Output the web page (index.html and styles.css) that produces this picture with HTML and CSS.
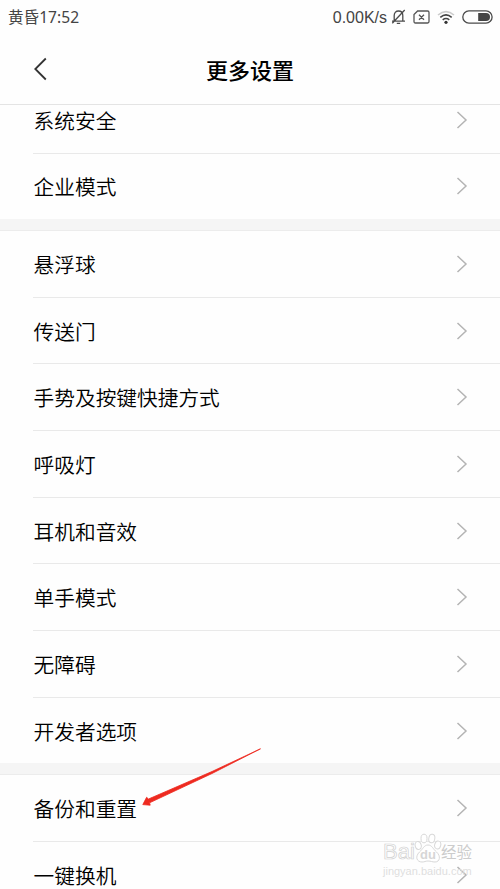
FILE: index.html
```
<!DOCTYPE html>
<html lang="zh-CN">
<head>
<meta charset="utf-8">
<title>更多设置</title>
<link rel="stylesheet" href="styles.css">
</head>
<body>
<svg class="defs" width="0" height="0"><symbol id="next" viewBox="0 0 12 18"><path d="M1.5 1 L10 9 L1.5 17" fill="none" stroke="#b4b4b4" stroke-width="1.5"/></symbol></svg>
<div class="phone">
  <header class="status">
    <span class="clock">黄昏17:52</span>
    <div class="indicators">
      <span class="speed">0.00K/s</span>
      <svg class="bell" width="15" height="16" viewBox="0 0 15 16" fill="none" stroke="#4c4c4c" stroke-width="1.3"><path d="M1 12.2H14M3.2 12V6.5C3.2 3.5 5 2 7.5 2S11.8 3.5 11.8 6.5V12M5.8 14.3H9.2M1.3 14.2L13.7 1"/></svg>
      <svg class="sim" width="17" height="14" viewBox="0 0 17 14" fill="none" stroke="#555" stroke-width="1.3"><path d="M4.6 1H14.6Q16 1 16 2.4V11.6Q16 13 14.6 13H2.4Q1 13 1 11.6V4.6ZM6 4.7L11 9.7M11 4.7L6 9.7"/></svg>
      <svg class="wifi" width="18" height="15" viewBox="0 0 18 15" fill="none" stroke-width="1.6"><path stroke="#ccc" d="M1 5Q9-1.8 17 5"/><path stroke="#444" d="M3.3 7.3Q9 2.6 14.7 7.3M5.7 9.8Q9 7.2 12.3 9.8"/><circle cx="9" cy="12.3" r="1.6" fill="#333"/></svg>
      <svg class="battery" width="31" height="14" viewBox="0 0 31 14"><rect x=".8" y=".9" width="29.3" height="12.2" rx="6.1" fill="none" stroke="#4b4b4b" stroke-width="1.3"/><path d="M16.2 3H24A4 4 0 0 1 24 11H16.2Z" fill="#444"/></svg>
    </div>
  </header>
  <nav class="titlebar">
    <svg class="back" width="14" height="24" viewBox="0 0 14 24"><path d="M12.8 1.5L2.3 12L12.8 22.5" fill="none" stroke="#333" stroke-width="1.8"/></svg>
    <h1>更多设置</h1>
  </nav>
  <main class="list">
    <section class="group clipped">
      <div class="row"><span>系统安全</span><svg class="next"><use href="#next"/></svg></div>
      <div class="row"><span>企业模式</span><svg class="next"><use href="#next"/></svg></div>
    </section>
    <section class="group">
      <div class="row"><span>悬浮球</span><svg class="next"><use href="#next"/></svg></div>
      <div class="row"><span>传送门</span><svg class="next"><use href="#next"/></svg></div>
      <div class="row"><span>手势及按键快捷方式</span><svg class="next"><use href="#next"/></svg></div>
      <div class="row"><span>呼吸灯</span><svg class="next"><use href="#next"/></svg></div>
      <div class="row"><span>耳机和音效</span><svg class="next"><use href="#next"/></svg></div>
      <div class="row"><span>单手模式</span><svg class="next"><use href="#next"/></svg></div>
      <div class="row"><span>无障碍</span><svg class="next"><use href="#next"/></svg></div>
      <div class="row"><span>开发者选项</span><svg class="next"><use href="#next"/></svg></div>
    </section>
    <section class="group">
      <div class="row"><span>备份和重置</span><svg class="next"><use href="#next"/></svg></div>
      <div class="row"><span>一键换机</span><svg class="next"><use href="#next"/></svg></div>
    </section>
  </main>
  <svg class="arrow" width="122" height="60" viewBox="0 0 122 60"><path d="M118.5 1.8L70 24.5L6.5 52L4.6 50.3L.8 57.6L8.2 58.2L7.6 55.8L70 26.5Z" fill="#ee2a20" stroke="#ee2a20" stroke-width=".8" stroke-linejoin="round"/></svg>
  <div class="watermark">
    <div class="brand"><span class="latin">Bai</span><svg width="28" height="32" viewBox="0 0 28 32" fill="#fff" stroke="#d8d8d8" stroke-width="1"><ellipse cx="4.2" cy="12.5" rx="3" ry="4" transform="rotate(-15 4.2 12.5)"/><ellipse cx="10" cy="5.5" rx="3" ry="4.3"/><ellipse cx="17.8" cy="5.5" rx="3" ry="4.3" transform="rotate(10 17.8 5.5)"/><ellipse cx="23.7" cy="12" rx="3" ry="4" transform="rotate(15 23.7 12)"/><path d="M14 12C10 12 9 16 5.5 19C.5 24 3 29 8 29C11 29 11 28 14 28S18 29 21 29C26 29 27 23 22.5 19C19 16 18 12 14 12Z"/><text x="14" y="26" text-anchor="middle">du</text></svg><span class="cn">经验</span></div>
    <div class="site">jingyan.baidu.com</div>
  </div>
</div>
</body>
</html>
```
FILE: styles.css
```
* { box-sizing: border-box; }
body { margin: 0; background: #fff; font-family: "Noto Sans CJK SC", sans-serif; color: #111; }
.defs { position: absolute; }
.phone { position: relative; width: 500px; height: 889px; overflow: hidden; display: flex; flex-direction: column; background: #fefefe; }
.status { height: 35px; padding: 0 7px 0 8px; display: flex; align-items: center; justify-content: space-between; flex: none; color: #444; }
.clock { font: 15.6px/35px "Noto Sans", "Noto Sans CJK SC", sans-serif; }
.indicators { display: flex; align-items: center; padding-bottom: 1px; }
.speed { font: 16px/35px "Liberation Sans", sans-serif; margin-right: 4px; }
.bell { margin-right: 7px; }
.sim { margin-right: 7px; }
.wifi { margin-right: 7px; }
.titlebar { height: 70px; flex: none; padding: 0 0 1px 33px; display: flex; align-items: center; border-bottom: 1px solid #e4e4e4; }
.back { flex: none; }
h1 { margin: 0 0 1px; width: 406px; text-align: center; font-size: 22px; line-height: 32px; font-weight: 500; color: #000; }
.list { flex: 1; min-height: 0; overflow: hidden; background: #f5f5f5; }
.group { background: #fefefe; margin-bottom: 12px; padding-left: 33px; box-shadow: 0 -1px #ececec; }
.clipped { margin-top: -18.2px; }
.row { height: 66.7px; display: flex; align-items: center; justify-content: space-between; padding: 0 32px 0 0; border-bottom: 1px solid #e9e9e9; font-size: 20.7px; line-height: 24px; font-weight: 350; color: #000; }
.row:last-child { height: 65.5px; border-bottom: 0; }
.next { width: 12px; height: 18px; }
.row span { padding-left: .6px; }
.arrow { position: absolute; left: 142px; top: 747px; }
.watermark { position: absolute; left: 383px; top: 835px; width: 92px; color: #fff; font-family: "Liberation Sans", "Noto Sans CJK SC", sans-serif; -webkit-text-stroke: .7px #d0d0d0; }
.brand { display: flex; align-items: flex-end; height: 30px; font-size: 22px; line-height: 24px; }
.brand svg { flex: none; margin-left: -2px; }
.latin { width: 33px; font-size: 22px; padding-bottom: 1px; }
.brand text { font: bold 13px "Liberation Sans", sans-serif; stroke: none; fill: #d6d6d6; -webkit-text-stroke: 0; }
.cn { font-size: 15.5px; line-height: 22px; font-weight: normal; color: #ccc; white-space: nowrap; -webkit-text-stroke: 0; margin-left: -1px; padding-bottom: 1px; }
.site { font-size: 11px; line-height: 13px; color: #dedede; -webkit-text-stroke: 0; }
```
